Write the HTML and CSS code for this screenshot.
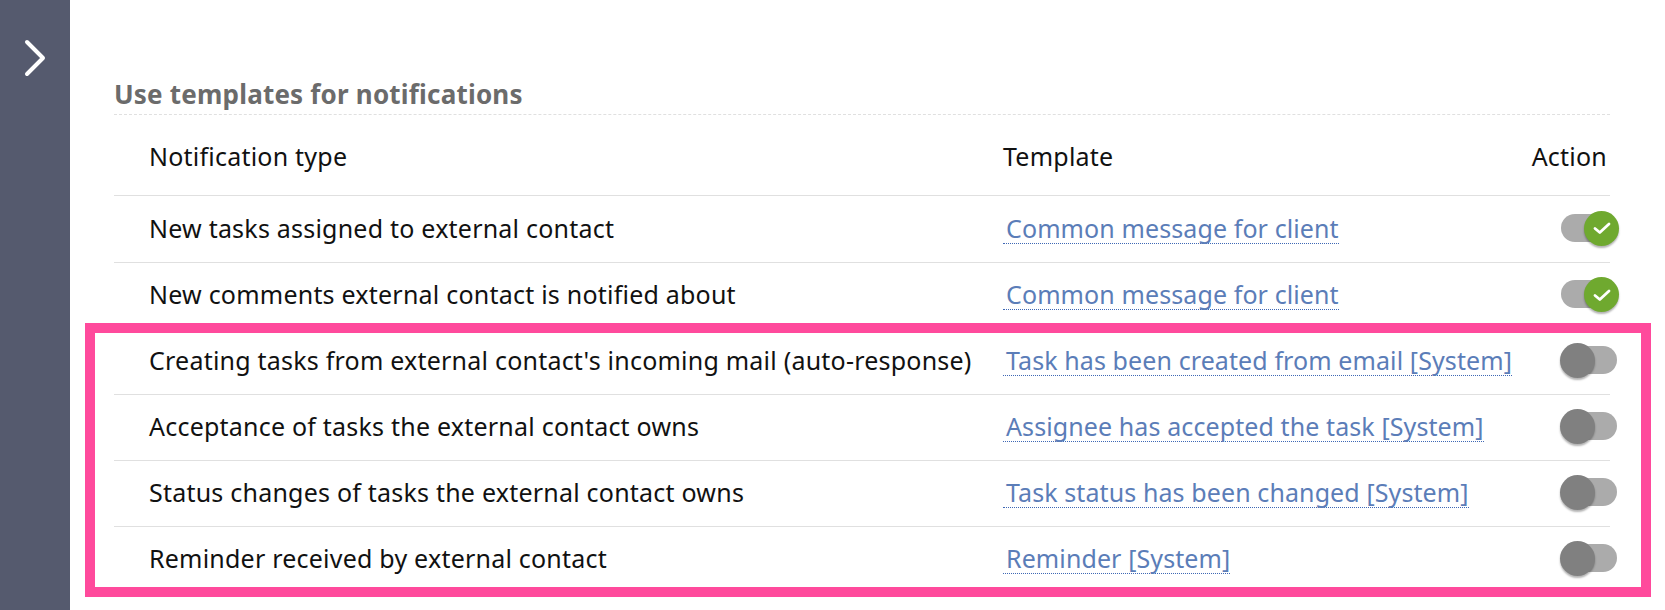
FILE: index.html
```html
<!DOCTYPE html>
<html lang="en">
<head>
  <meta charset="UTF-8"/>
  <title>Use templates for notifications</title>
  <link rel="stylesheet" href="styles.css">
</head>
<body>
  <div class="page">
    <aside class="sidebar">
      <svg class="chevron" width="24" height="40" viewBox="0 0 24 40">
        <path d="M4 4 L20 20 L4 36" fill="none" stroke="#fff" stroke-width="4" stroke-linecap="round" stroke-linejoin="round"/>
      </svg>
    </aside>
    <main class="content">
      <h2 class="title">Use templates for notifications</h2>
      <div class="row head">
        <div class="type">Notification type</div>
        <div class="template">Template</div>
        <div class="action">Action</div>
      </div>
      <div class="row">
        <div class="type">New tasks assigned to external contact</div>
        <div class="template"><a class="link">Common message for client</a></div>
        <div class="action"><span class="toggle on"><span class="knob"><svg width="18" height="14" viewBox="0 0 18 14"><path d="M2 7.5 L6.8 11.5 L16 3" fill="none" stroke="#fff" stroke-width="2.8" stroke-linecap="round" stroke-linejoin="round"/></svg></span></span></div>
      </div>
      <div class="row">
        <div class="type">New comments external contact is notified about</div>
        <div class="template"><a class="link">Common message for client</a></div>
        <div class="action"><span class="toggle on"><span class="knob"><svg width="18" height="14" viewBox="0 0 18 14"><path d="M2 7.5 L6.8 11.5 L16 3" fill="none" stroke="#fff" stroke-width="2.8" stroke-linecap="round" stroke-linejoin="round"/></svg></span></span></div>
      </div>
      <div class="row">
        <div class="type">Creating tasks from external contact's incoming mail (auto-response)</div>
        <div class="template"><a class="link">Task has been created from email [System]</a></div>
        <div class="action"><span class="toggle"><span class="knob"></span></span></div>
      </div>
      <div class="row">
        <div class="type">Acceptance of tasks the external contact owns</div>
        <div class="template"><a class="link">Assignee has accepted the task [System]</a></div>
        <div class="action"><span class="toggle"><span class="knob"></span></span></div>
      </div>
      <div class="row">
        <div class="type">Status changes of tasks the external contact owns</div>
        <div class="template"><a class="link">Task status has been changed [System]</a></div>
        <div class="action"><span class="toggle"><span class="knob"></span></span></div>
      </div>
      <div class="row">
        <div class="type">Reminder received by external contact</div>
        <div class="template"><a class="link">Reminder [System]</a></div>
        <div class="action"><span class="toggle"><span class="knob"></span></span></div>
      </div>
    </main>
  </div>
  <div class="highlight"></div>
</body>
</html>
```

FILE: styles.css
```css
html, body {
  margin: 0;
  padding: 0;
  height: 100%;
  overflow: hidden;
  background: #fff;
}
body {
  font-family: "Noto Sans", sans-serif;
  font-size: 25px;
  letter-spacing: 0.22px;
  color: #111;
}
.page {
  display: flex;
  height: 610px;
}
.sidebar {
  width: 70px;
  flex: none;
  background: #555a6e;
  padding: 38px 0 0 23px;
  box-sizing: border-box;
}
.chevron {
  display: block;
}
.content {
  width: 1496px;
  margin-left: 44px;
  padding-top: 76px;
}
.title {
  margin: 0;
  height: 39px;
  line-height: 36px;
  font-size: 26px;
  font-weight: 700;
  letter-spacing: 0.2px;
  color: #6b6b6b;
  border-bottom: 1px dashed #e0e0e0;
  box-sizing: border-box;
}
.row {
  display: grid;
  grid-template-columns: 889px 1fr auto;
  align-items: center;
  height: 66px;
  padding-bottom: 3px;
  border-top: 1px solid #e0e0e0;
  box-sizing: border-box;
}
.row.head {
  height: 80px;
  border-top: none;
  padding-top: 2px;
  padding-bottom: 0;
}
.head + .row {
  height: 67px;
}
.type {
  padding-left: 35px;
}
.link {
  display: inline-block;
  padding-left: 3px;
  line-height: 30px;
  letter-spacing: 0.1px;
  color: #5b7db8;
  border-bottom: 1px dotted #3f68b5;
}
.action {
  padding-right: 3px;
}
.toggle {
  display: block;
  position: relative;
  width: 56px;
  height: 28px;
  margin-right: -10px;
  border-radius: 14px;
  background: #ababab;
}
.knob {
  position: absolute;
  top: -3px;
  left: -1px;
  width: 35px;
  height: 35px;
  border-radius: 50%;
  background: #808080;
  box-shadow: 0 2px 2px rgba(0,0,0,0.3);
  display: flex;
  align-items: center;
  justify-content: center;
}
.toggle.on .knob {
  left: 23px;
  background: #6fa92f;
}
.highlight {
  position: absolute;
  left: 85px;
  top: 323px;
  width: 1566px;
  height: 274px;
  border: 10px solid #ff4a9c;
  box-sizing: border-box;
}
```
